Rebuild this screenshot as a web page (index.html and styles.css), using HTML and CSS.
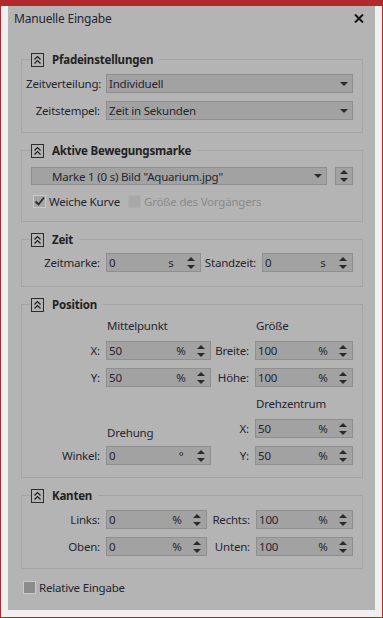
FILE: index.html
```html
<!DOCTYPE html>
<html lang="de">

<head>
  <meta charset="UTF-8" />
  <meta name="viewport" content="width=device-width, initial-scale=1.0" />
  <title>Manuelle Eingabe</title>
  <link rel="stylesheet" href="styles.css">
</head>

<body>
  <div class="window">
    <div class="panel">
      <div class="titlebar">
        <span class="title">Manuelle Eingabe</span>
        <svg class="close" width="10" height="9" viewBox="0 0 10 9">
          <path d="M1 0.5 L9 8.5 M9 0.5 L1 8.5" stroke="#151515" stroke-width="2" />
        </svg>
      </div>

      <div class="groups">
        <!-- Pfadeinstellungen -->
        <fieldset class="group">
          <legend><span class="collapse"><svg width="11" height="12" viewBox="0 0 11 12"><path d="M2.5 5.5 L5.5 2.5 L8.5 5.5 M2.5 9.5 L5.5 6.5 L8.5 9.5" fill="none" stroke="#1e1e1e" stroke-width="1.2" /></svg></span>Pfadeinstellungen</legend>
          <div class="form form-path">
            <label>Zeitverteilung:</label>
            <div class="select">Individuell<svg class="drop" width="8" height="4" viewBox="0 0 8 4"><path d="M0 0 H8 L4 4 Z" fill="#2a2a2a" /></svg></div>
            <label>Zeitstempel:</label>
            <div class="select">Zeit in Sekunden<svg class="drop" width="8" height="4" viewBox="0 0 8 4"><path d="M0 0 H8 L4 4 Z" fill="#2a2a2a" /></svg></div>
          </div>
        </fieldset>

        <!-- Aktive Bewegungsmarke -->
        <fieldset class="group group-mark">
          <legend><span class="collapse"><svg width="11" height="12" viewBox="0 0 11 12"><path d="M2.5 5.5 L5.5 2.5 L8.5 5.5 M2.5 9.5 L5.5 6.5 L8.5 9.5" fill="none" stroke="#1e1e1e" stroke-width="1.2" /></svg></span>Aktive Bewegungsmarke</legend>
          <div class="mark-row">
            <div class="select select-mark">Marke 1 (0 s) Bild "Aquarium.jpg"<svg class="drop" width="8" height="4" viewBox="0 0 8 4"><path d="M0 0 H8 L4 4 Z" fill="#2a2a2a" /></svg></div>
            <div class="spin-button"><svg width="8" height="14" viewBox="0 0 8 14"><path d="M0 5 H8 L4 1 Z M0 9 H8 L4 13 Z" fill="#2a2a2a" /></svg></div>
          </div>
          <div class="check-row">
            <span class="check checked"><svg width="11" height="11" viewBox="0 0 11 11"><path d="M1.5 5.5 L4.5 8.5 L10 1.5" fill="none" stroke="#2a2a2a" stroke-width="1.8" /></svg></span>
            <span class="check-label">Weiche Kurve</span>
            <span class="check disabled"></span>
            <span class="muted">Größe des Vorgängers</span>
          </div>
        </fieldset>

        <!-- Zeit -->
        <fieldset class="group group-time">
          <legend><span class="collapse"><svg width="11" height="12" viewBox="0 0 11 12"><path d="M2.5 5.5 L5.5 2.5 L8.5 5.5 M2.5 9.5 L5.5 6.5 L8.5 9.5" fill="none" stroke="#1e1e1e" stroke-width="1.2" /></svg></span>Zeit</legend>
          <div class="form form-time">
            <label>Zeitmarke:</label>
            <div class="num"><span class="val">0</span><span class="unit">s</span><svg class="arrows" width="8" height="14" viewBox="0 0 8 14"><path d="M0 5 H8 L4 1 Z M0 9 H8 L4 13 Z" fill="#2a2a2a" /></svg></div>
            <label>Standzeit:</label>
            <div class="num"><span class="val">0</span><span class="unit">s</span><svg class="arrows" width="8" height="14" viewBox="0 0 8 14"><path d="M0 5 H8 L4 1 Z M0 9 H8 L4 13 Z" fill="#2a2a2a" /></svg></div>
          </div>
        </fieldset>

        <!-- Position -->
        <fieldset class="group group-pos">
          <legend><span class="collapse"><svg width="11" height="12" viewBox="0 0 11 12"><path d="M2.5 5.5 L5.5 2.5 L8.5 5.5 M2.5 9.5 L5.5 6.5 L8.5 9.5" fill="none" stroke="#1e1e1e" stroke-width="1.2" /></svg></span>Position</legend>
          <div class="form form-pos">
            <span></span>
            <span class="head">Mittelpunkt</span>
            <span></span>
            <span class="head">Größe</span>

            <label>X:</label>
            <div class="num"><span class="val">50</span><span class="unit">%</span><svg class="arrows" width="8" height="14" viewBox="0 0 8 14"><path d="M0 5 H8 L4 1 Z M0 9 H8 L4 13 Z" fill="#2a2a2a" /></svg></div>
            <label>Breite:</label>
            <div class="num"><span class="val">100</span><span class="unit">%</span><svg class="arrows" width="8" height="14" viewBox="0 0 8 14"><path d="M0 5 H8 L4 1 Z M0 9 H8 L4 13 Z" fill="#2a2a2a" /></svg></div>

            <label>Y:</label>
            <div class="num"><span class="val">50</span><span class="unit">%</span><svg class="arrows" width="8" height="14" viewBox="0 0 8 14"><path d="M0 5 H8 L4 1 Z M0 9 H8 L4 13 Z" fill="#2a2a2a" /></svg></div>
            <label>Höhe:</label>
            <div class="num"><span class="val">100</span><span class="unit">%</span><svg class="arrows" width="8" height="14" viewBox="0 0 8 14"><path d="M0 5 H8 L4 1 Z M0 9 H8 L4 13 Z" fill="#2a2a2a" /></svg></div>

            <span></span>
            <span></span>
            <span></span>
            <span class="head">Drehzentrum</span>

            <span></span>
            <span class="head head-low">Drehung</span>
            <label>X:</label>
            <div class="num"><span class="val">50</span><span class="unit">%</span><svg class="arrows" width="8" height="14" viewBox="0 0 8 14"><path d="M0 5 H8 L4 1 Z M0 9 H8 L4 13 Z" fill="#2a2a2a" /></svg></div>

            <label>Winkel:</label>
            <div class="num"><span class="val">0</span><span class="unit">°</span><svg class="arrows" width="8" height="14" viewBox="0 0 8 14"><path d="M0 5 H8 L4 1 Z M0 9 H8 L4 13 Z" fill="#2a2a2a" /></svg></div>
            <label>Y:</label>
            <div class="num"><span class="val">50</span><span class="unit">%</span><svg class="arrows" width="8" height="14" viewBox="0 0 8 14"><path d="M0 5 H8 L4 1 Z M0 9 H8 L4 13 Z" fill="#2a2a2a" /></svg></div>
          </div>
        </fieldset>

        <!-- Kanten -->
        <fieldset class="group group-edges">
          <legend><span class="collapse"><svg width="11" height="12" viewBox="0 0 11 12"><path d="M2.5 5.5 L5.5 2.5 L8.5 5.5 M2.5 9.5 L5.5 6.5 L8.5 9.5" fill="none" stroke="#1e1e1e" stroke-width="1.2" /></svg></span>Kanten</legend>
          <div class="form form-edges">
            <label>Links:</label>
            <div class="num"><span class="val">0</span><span class="unit">%</span><svg class="arrows" width="8" height="14" viewBox="0 0 8 14"><path d="M0 5 H8 L4 1 Z M0 9 H8 L4 13 Z" fill="#2a2a2a" /></svg></div>
            <label>Rechts:</label>
            <div class="num"><span class="val">100</span><span class="unit">%</span><svg class="arrows" width="8" height="14" viewBox="0 0 8 14"><path d="M0 5 H8 L4 1 Z M0 9 H8 L4 13 Z" fill="#2a2a2a" /></svg></div>
            <label>Oben:</label>
            <div class="num"><span class="val">0</span><span class="unit">%</span><svg class="arrows" width="8" height="14" viewBox="0 0 8 14"><path d="M0 5 H8 L4 1 Z M0 9 H8 L4 13 Z" fill="#2a2a2a" /></svg></div>
            <label>Unten:</label>
            <div class="num"><span class="val">100</span><span class="unit">%</span><svg class="arrows" width="8" height="14" viewBox="0 0 8 14"><path d="M0 5 H8 L4 1 Z M0 9 H8 L4 13 Z" fill="#2a2a2a" /></svg></div>
          </div>
        </fieldset>

        <div class="check-row relative">
          <span class="check dark"></span>
          <span>Relative Eingabe</span>
        </div>
      </div>
    </div>
  </div>
</body>

</html>
```

FILE: styles.css
```css
* {
  box-sizing: border-box;
}

body {
  margin: 0;
  font-family: 'Noto Sans', sans-serif;
  font-size: 11.5px;
  letter-spacing: -0.2px;
  color: #252530;
}

.window {
  width: 383px;
  height: 618px;
  border: solid #b0292c;
  border-width: 6px 1px 1px;
  background: #f0f0f0;
  padding: 0 7px 7px;
}

.panel {
  height: 100%;
  background: #b4b4b4;
}

.titlebar {
  height: 24px;
  display: flex;
  align-items: center;
  justify-content: space-between;
  padding: 0 11px 0 6px;
}

.title {
  font-size: 12px;
}

.groups {
  padding: 22px 12px 0 13px;
}

.group {
  margin: 0 0 10px;
  padding: 0 9px 12px 4px;
  border: 1px solid #a5a5a5;
  min-width: 0;
}

.group legend {
  display: flex;
  align-items: center;
  gap: 8px;
  height: 15px;
  margin-left: 5px;
  padding: 0 6px 0 0;
  font-weight: bold;
  color: #222;
}

.collapse {
  display: flex;
  width: 13px;
  height: 14px;
  border: 1px solid #2c2c2c;
}

.form {
  display: grid;
  row-gap: 8px;
  padding-top: 7px;
}

.form label {
  text-align: right;
  padding-right: 6px;
  white-space: nowrap;
  align-self: center;
}

.form-path {
  grid-template-columns: 80px 1fr;
}

.form-time {
  grid-template-columns: 80px 95px 61px 91px;
  padding-top: 6px;
}

.group-time {
  padding-bottom: 14px;
}

.form-pos {
  grid-template-columns: 80px 105px 44px 98px;
  grid-template-rows: 16px 19px 19px 16px 19px 19px;
  padding-top: 5px;
}

.form-edges {
  grid-template-columns: 80px 101px 49px 97px;
}

.head {
  align-self: center;
  padding-left: 1px;
  white-space: nowrap;
}

.head-low {
  align-self: end;
  margin-bottom: -2px;
}

.select,
.num {
  height: 19px;
  display: flex;
  align-items: center;
  background: #a2a2a2;
  border: 1px solid #8f8f8f;
  white-space: nowrap;
}

.select {
  justify-content: space-between;
  padding: 0 4px 0 2px;
}

.num {
  padding: 0 5px 0 2px;
}

.val {
  flex: 1;
}

.unit {
  width: 14px;
  margin-right: 9px;
  text-align: center;
}

.group-mark .mark-row {
  display: flex;
  gap: 8px;
  margin: 9px 0 0 5px;
}

.select-mark {
  flex: 1;
  height: 18px;
  padding-left: 20px;
}

.spin-button {
  width: 18px;
  height: 18px;
  display: flex;
  align-items: center;
  justify-content: center;
  background: #a2a2a2;
  border: 1px solid #8f8f8f;
}

.check-row {
  display: flex;
  align-items: center;
  height: 16px;
  gap: 3px;
  margin: 8px 0 0 7px;
  white-space: nowrap;
}

.check-label {
  width: 76px;
}

.check {
  display: flex;
  align-items: center;
  justify-content: center;
  width: 13px;
  height: 13px;
  border: 1px solid #cacaca;
  background: #a6a6a6;
}

.check.disabled {
  border-color: #adadad;
  background: #a8a8a8;
}

.check.dark {
  background: #8c8c8c;
}

.muted {
  color: #8a8a8a;
}

.relative {
  margin: 7px 0 0 2px;
}
```
